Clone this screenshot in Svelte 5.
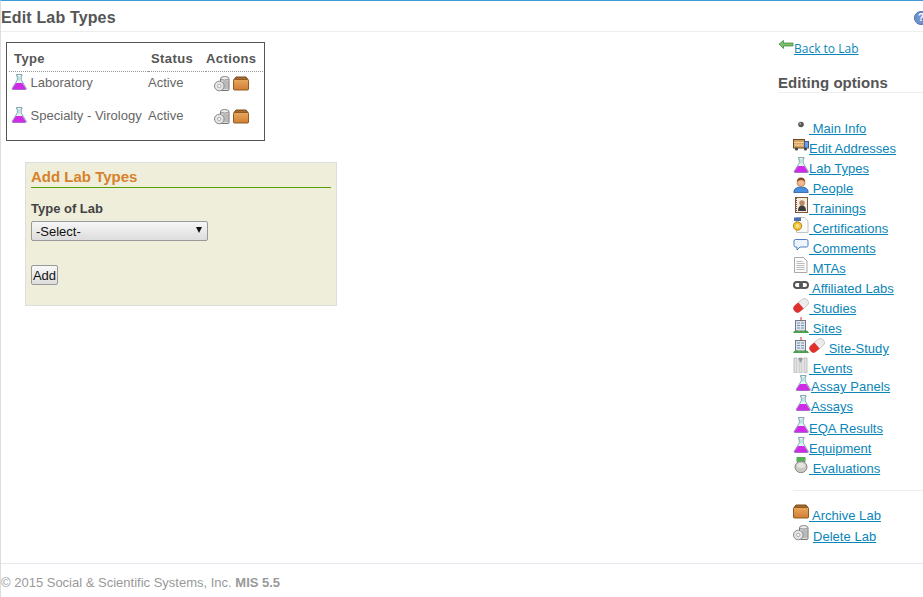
<script lang="ts">
	interface Option {
		label: string;
		icons: string[];
		indent: number;
		space?: boolean;
		shift?: number;
	}

	const labTypes = [
		{ type: 'Laboratory', status: 'Active' },
		{ type: 'Specialty - Virology', status: 'Active' }
	];

	const options: Option[] = [
		{ label: 'Main Info', icons: ['dot'], indent: 0, space: true },
		{ label: 'Edit Addresses', icons: ['truck'], indent: 0 },
		{ label: 'Lab Types', icons: ['flask'], indent: 0 },
		{ label: 'People', icons: ['person'], indent: 0, space: true },
		{ label: 'Trainings', icons: ['training'], indent: 0, space: true },
		{ label: 'Certifications', icons: ['cert'], indent: 0, space: true },
		{ label: 'Comments', icons: ['comment'], indent: 0, space: true },
		{ label: 'MTAs', icons: ['doc'], indent: 0, space: true },
		{ label: 'Affiliated Labs', icons: ['link'], indent: 0, space: true },
		{ label: 'Studies', icons: ['pill'], indent: 0, space: true },
		{ label: 'Sites', icons: ['building'], indent: 0, space: true },
		{ label: 'Site-Study', icons: ['building', 'pill'], indent: 0, space: true },
		{ label: 'Events', icons: ['events'], indent: 0, space: true },
		{ label: 'Assay Panels', icons: ['flask'], indent: 2, shift: -2 },
		{ label: 'Assays', icons: ['flask'], indent: 2 },
		{ label: 'EQA Results', icons: ['flask'], indent: 0, shift: 2 },
		{ label: 'Equipment', icons: ['flask'], indent: 0 },
		{ label: 'Evaluations', icons: ['jar'], indent: 0, space: true }
	];
</script>

{#snippet icon(name: string)}
	<svg class="icon" viewBox="0 0 16 16" width="16" height="16" aria-hidden="true">
		{#if name === 'flask'}
			<path d="M5.500 .5h5.500v1.400h-.8v4l5 8.300q.6 1.300-.8 1.300H2.100q-1.400 0-.8-1.300l5-8.300v-4h-.8z" fill="#e2f4f4" stroke="#6b929a" stroke-width=".8" />
			<path d="M5 9h6.300l3.500 5.600q.3 1-.8 1H2.200q-1.100 0-.8-1z" fill="#cf2be6" />
			<path d="M8 2.500v4" stroke="#8fd0d6" fill="none" />
		{:else if name === 'dot'}
			<circle cx="8" cy="7.500" r="2.800" fill="#555" />
			<circle cx="7.300" cy="6.800" r="1" fill="#aaa" />
		{:else if name === 'truck'}
			<rect x=".5" y="2.500" width="11" height="8.500" fill="#d9a15e" stroke="#6b4a25" />
			<path d="M1.500 5.500h9M1.500 8h9" stroke="#f2d6ac" />
			<rect x="11.500" y="4.500" width="4" height="6.500" fill="#6f9fe0" stroke="#3b5d94" />
			<circle cx="3.500" cy="12" r="1.600" fill="#444" />
			<circle cx="12.500" cy="12" r="1.600" fill="#444" />
		{:else if name === 'person'}
			<path d="M.8 15.500q0-5.500 7.200-5.500t7.200 5.500z" fill="#4a8fe0" stroke="#2a5a9a" stroke-width=".8" />
			<circle cx="8" cy="5.500" r="4" fill="#f1b98c" stroke="#a0623a" stroke-width=".6" />
			<path d="M3.900 5q0-4.500 4.100-4.500T12.100 5q-2-2.200-4.100-2T3.900 5z" fill="#8a4a20" />
		{:else if name === 'training'}
			<rect x="2.500" y=".5" width="12" height="15" fill="#f3ecdf" stroke="#7a5a3a" />
			<path d="M3 1v14" stroke="#8a4a2a" stroke-width="2" stroke-dasharray="1 1" />
			<circle cx="9" cy="6" r="2.700" fill="#b98a68" />
			<path d="M5 14q0-5.500 4-5.500t4 5.500z" fill="#3c3c3c" />
		{:else if name === 'cert'}
			<path d="M3.500 .5h8l3.500 3.500v11.500H3.500z" fill="#fafafa" stroke="#c4c4c4" />
			<rect x="1" y=".5" width="7" height="3.500" fill="#4a6fb0" />
			<circle cx="4.500" cy="9" r="4.200" fill="#f2c230" stroke="#b08a20" />
			<circle cx="4.500" cy="9" r="2" fill="#f8e08a" />
		{:else if name === 'comment'}
			<path d="M2.500 2.500h11q1.500 0 1.500 1.500v4.500q0 1.500-1.500 1.500H7l-3 3v-3H2.500Q1 10 1 8.500V4q0-1.500 1.500-1.500z" fill="#edf4fc" stroke="#4f7fc0" />
		{:else if name === 'doc'}
			<path d="M1.500 .5h9l3.500 3.500v11.500H1.500z" fill="#fbfbfb" stroke="#aaa" />
			<path d="M3.500 4.500h6M3.500 6.500h8M3.500 8.500h8M3.500 10.500h8M3.500 12.500h8" stroke="#bbb" />
		{:else if name === 'link'}
			<rect x="1" y="5" width="8" height="6" rx="3" fill="none" stroke="#555" stroke-width="2" />
			<rect x="7" y="5" width="8" height="6" rx="3" fill="none" stroke="#555" stroke-width="2" />
		{:else if name === 'pill'}
			<g transform="rotate(-40 8 8.500)">
				<rect x="-.5" y="4.500" width="17" height="8" rx="4" fill="#ececec" stroke="#bbb" stroke-width=".7" />
				<path d="M3.500 4.500H8v8H3.500a4 4 0 0 1 0-8z" fill="#e0302c" />
			</g>
		{:else if name === 'building'}
			<rect x="2.500" y="3.500" width="10" height="10.500" fill="#dfe5e8" stroke="#778" />
			<path d="M4 6h3M8 6h3M4 8.500h3M8 8.500h3M4 11h3M8 11h3" stroke="#6f93b5" stroke-width="1.200" />
			<path d="M8 0v3.500" stroke="#c33" />
			<path d="M0 16q1-3 3-2.500 2-.5 3 1 2-1.500 4 0 1-1.500 3-1 2-.5 3 2.500z" fill="#4aa04a" />
		{:else if name === 'events'}
			<path d="M1 1h3v15H1zM6 1h3v15H6zM11 1h3v15h-3z" fill="#e2e2e2" stroke="#b4b4b4" stroke-width=".8" />
			<path d="M5 1h5L7.500 6z" fill="#999" />
		{:else if name === 'jar'}
			<rect x="3.500" y="0" width="9" height="5" fill="#55b055" />
			<ellipse cx="8" cy="10" rx="6" ry="5.700" fill="#c9c9c4" stroke="#888" />
			<ellipse cx="8" cy="8.500" rx="4" ry="2.500" fill="#e4e4e0" />
		{:else if name === 'archive'}
			<path d="M1 3.500 3 1h10l2 2.500z" fill="#a86a2c" stroke="#7a4c1e" />
			<rect x=".5" y="3.500" width="15" height="10.500" rx="1" fill="url(#box)" stroke="#8f5a24" />
		{:else if name === 'trash'}
			<rect x="6.500" y="2" width="8.500" height="12.500" rx="1" fill="#dcdcdc" stroke="#777" />
			<ellipse cx="10.700" cy="2.300" rx="4" ry="1.800" fill="#eee" stroke="#888" />
			<path d="M10 5v8M12 5v8M14 5v8" stroke="#999" />
			<circle cx="5.300" cy="10" r="4.800" fill="#e6e6e6" stroke="#888" />
			<circle cx="5.300" cy="10" r="1.700" fill="#fff" stroke="#aaa" />
		{/if}
	</svg>
{/snippet}

<svg class="defs" width="0" height="0" aria-hidden="true">
	<defs>
		<linearGradient id="box" x1="0" y1="0" x2="0" y2="1">
			<stop offset="0" stop-color="#e9a860" />
			<stop offset="1" stop-color="#d07f32" />
		</linearGradient>
	</defs>
</svg>

<div class="page">
	<header class="topbar">
		<h1>Edit Lab Types</h1>
		<span class="help">?</span>
	</header>

	<div class="content">
		<main class="main">
			<div class="types-box">
				<table>
					<thead>
						<tr>
							<th class="col-type">Type</th>
							<th class="col-status">Status</th>
							<th class="col-actions">Actions</th>
						</tr>
					</thead>
					<tbody>
						{#each labTypes as lab}
							<tr>
								<td class="cell-type">{@render icon('flask')} {lab.type}</td>
								<td class="cell-status">{lab.status}</td>
								<td class="cell-actions">{@render icon('trash')}{@render icon('archive')}</td>
							</tr>
						{/each}
					</tbody>
				</table>
			</div>

			<form class="add-panel" onsubmit={(e) => e.preventDefault()}>
				<h2>Add Lab Types</h2>
				<label for="lab-type">Type of Lab</label>
				<div class="select-wrap">
					<select id="lab-type">
						<option>-Select-</option>
					</select>
				</div>
				<button type="submit">Add</button>
			</form>
		</main>

		<aside class="sidebar">
			<div class="back">
				<svg class="back-arrow" viewBox="0 0 16 10" width="16" height="10" aria-hidden="true">
					<path d="M1 4 5.500 .5V3H15v3H5.500v2.500z" fill="#7cc26a" stroke="#3f7f3a" stroke-width=".7" />
				</svg><a href="#back">Back to Lab</a>
			</div>
			<h3>Editing options</h3>
			<ul class="options">
				{#each options as opt}
					<li style="margin-left: {opt.indent}px; margin-top: {opt.shift ?? 0}px">
						{#each opt.icons as name}{@render icon(name)}{/each}<a href="#option">{opt.space ? ' ' : ''}{opt.label}</a>
					</li>
				{/each}
			</ul>
			<ul class="options danger">
				<li>{@render icon('archive')}<a href="#archive">{' '}Archive Lab</a></li>
				<li>{@render icon('trash')}<a class="delete" href="#delete">Delete Lab</a></li>
			</ul>
		</aside>
	</div>

	<footer>© 2015 Social &amp; Scientific Systems, Inc. <b>MIS 5.5</b></footer>
</div>

<style>
	:global(body) {
		margin: 0;
		background: #fff;
		overflow: hidden;
	}

	.defs {
		position: absolute;
	}

	.page {
		display: flex;
		flex-direction: column;
		height: 597px;
		box-sizing: border-box;
		border-top: 1px solid #3f9bd8;
		border-left: 1px solid #ddd;
		font-family: 'Liberation Sans', Arial, sans-serif;
		font-size: 13px;
		color: #555;
	}

	.topbar {
		display: flex;
		justify-content: space-between;
		align-items: center;
		height: 30px;
		flex: none;
		border-bottom: 1px solid #eee;
		overflow: hidden;
	}

	h1 {
		margin: 4px 0 0;
		font-size: 16px;
		line-height: 26px;
		letter-spacing: 0.15px;
		color: #555;
	}

	.help {
		flex: none;
		width: 14px;
		height: 14px;
		margin: 3px -5px 0 0;
		border-radius: 50%;
		background: #6f93cf;
		border: 1px solid #4b70ad;
		box-sizing: border-box;
		color: #fff;
		font-size: 10px;
		font-weight: bold;
		line-height: 12px;
		text-align: center;
	}

	.content {
		display: flex;
		flex: 1;
		min-height: 0;
	}

	.main {
		flex: 1;
		padding: 10px 0 0 5px;
	}

	.types-box {
		width: 259px;
		height: 99px;
		box-sizing: border-box;
		border: 1px solid #555;
		padding: 7px 2px 0;
	}

	table {
		width: 254px;
		border-collapse: collapse;
		table-layout: fixed;
	}

	th {
		height: 21px;
		padding: 0 0 4px;
		box-sizing: border-box;
		font-size: 13px;
		letter-spacing: 0.4px;
		text-align: left;
		border-bottom: 1px dotted #999;
	}

	.col-type {
		width: 139px;
		padding-left: 5px;
	}

	.col-status {
		width: 58px;
		padding-left: 3px;
	}

	td {
		height: 33px;
		padding: 0 0 11px;
		box-sizing: border-box;
		font-size: 13px;
		color: #666;
		white-space: nowrap;
	}

	.cell-type {
		padding-left: 2px;
	}

	.cell-actions {
		padding-left: 8px;
	}

	.cell-actions .icon {
		margin-right: 3px;
		vertical-align: -8px;
	}

	.add-panel {
		display: flex;
		flex-direction: column;
		align-items: flex-start;
		box-sizing: border-box;
		width: 312px;
		height: 144px;
		margin: 21px 0 0 19px;
		padding: 5px 5px 0;
		background: #eeeeda;
		border: 1px solid #ddd;
	}

	h2 {
		width: 100%;
		margin: 0;
		padding-bottom: 1px;
		border-bottom: 1px solid #5a9e00;
		font-size: 15px;
		line-height: 18px;
		color: #d8812a;
	}

	label {
		margin-top: 13px;
		font-weight: bold;
		line-height: 15px;
		color: #444;
	}

	.select-wrap {
		position: relative;
		margin-top: 5px;
	}

	.select-wrap::after {
		content: '';
		position: absolute;
		right: 6px;
		top: 6px;
		border: 3.5px solid transparent;
		border-top: 6px solid #111;
		border-bottom: 0;
		pointer-events: none;
	}

	select {
		display: block;
		appearance: none;
		width: 177px;
		height: 20px;
		padding: 0 0 0 4px;
		border: 1px solid #999;
		border-radius: 2px;
		background: linear-gradient(#f6f6f6, #ddd);
		font-family: inherit;
		font-size: 13px;
		color: #111;
	}

	button {
		width: 27px;
		height: 20px;
		margin-top: 24px;
		padding: 0;
		border: 1px solid #999;
		border-radius: 2px;
		background: linear-gradient(#f8f8f8, #ddd);
		font-family: inherit;
		font-size: 13px;
		color: #111;
	}

	.sidebar {
		flex: none;
		width: 145px;
		padding-top: 7px;
	}

	.back {
		height: 20px;
		font-family: 'Open Sans', sans-serif;
		font-size: 12px;
		line-height: 20px;
	}

	.back-arrow {
		vertical-align: 3px;
	}

	h3 {
		margin: 14px 0 0;
		height: 19px;
		border-bottom: 1px solid #eee;
		font-size: 15px;
		line-height: 20px;
		letter-spacing: 0.05px;
		color: #555;
	}

	.options {
		list-style: none;
		margin: 0;
		padding: 24px 0 0 15px;
		letter-spacing: 0.03px;
	}

	.options li {
		height: 20px;
		line-height: 20px;
		white-space: pre;
	}

	.danger {
		margin-top: 13px;
		padding-top: 13px;
		margin-left: 15px;
		padding-left: 0;
		border-top: 1px solid #eee;
	}

	.danger li {
		height: 21px;
	}

	.delete {
		margin-left: 4px;
	}

	a {
		color: #0a86b8;
		text-decoration: underline;
	}

	.icon {
		vertical-align: baseline;
	}

	.cell-type .icon {
		vertical-align: -3px;
	}

	footer {
		flex: none;
		height: 34px;
		box-sizing: border-box;
		border-top: 1px solid #e4e8ee;
		padding-top: 11px;
		font-size: 13px;
		line-height: 15px;
		color: #999;
		white-space: nowrap;
	}
</style>
